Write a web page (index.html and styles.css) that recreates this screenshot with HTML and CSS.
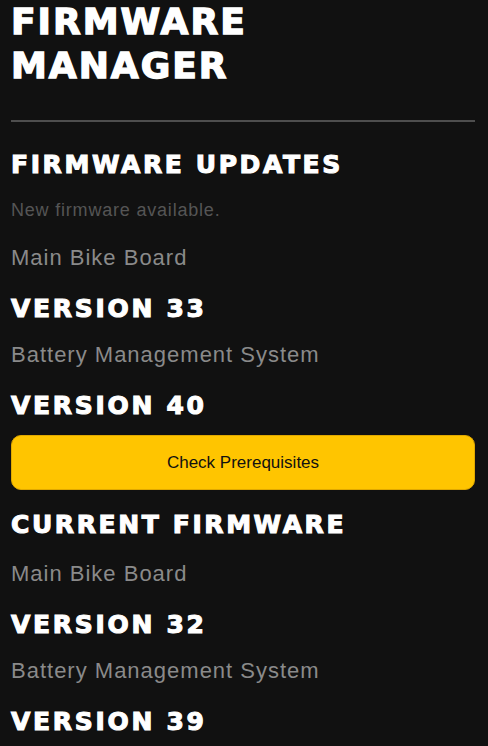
FILE: index.html
```html
<!DOCTYPE html>
<html lang="en">
<head>
<meta charset="utf-8">
<title>Firmware Manager</title>
<link rel="stylesheet" href="styles.css">
</head>
<body>
<main class="page">
  <h1 class="page-title">FIRMWARE<br>MANAGER</h1>
  <div class="divider"></div>

  <section class="section section-updates">
    <h2 class="section-title">FIRMWARE UPDATES</h2>
    <p class="note">New firmware available.</p>
    <div class="item">
      <div class="item-label">Main Bike Board</div>
      <div class="item-version">VERSION 33</div>
    </div>
    <div class="item">
      <div class="item-label">Battery Management System</div>
      <div class="item-version">VERSION 40</div>
    </div>
  </section>

  <button class="primary-btn" type="button">Check Prerequisites</button>

  <section class="section section-current">
    <h2 class="section-title">CURRENT FIRMWARE</h2>
    <div class="item">
      <div class="item-label">Main Bike Board</div>
      <div class="item-version">VERSION 32</div>
    </div>
    <div class="item">
      <div class="item-label">Battery Management System</div>
      <div class="item-version">VERSION 39</div>
    </div>
  </section>
</main>
</body>
</html>
```

FILE: styles.css
```css
html, body {
  margin: 0;
  padding: 0;
  background: #111111;
}

body {
  font-family: "Liberation Sans", Arial, sans-serif;
  color: #ffffff;
  overflow: hidden;
}

.page {
  display: flex;
  flex-direction: column;
  padding: 0 13px 0 11px;
}

.page-title {
  margin: 0;
  font-family: "DejaVu Sans", sans-serif;
  font-weight: bold;
  font-size: 36px;
  line-height: 44px;
  letter-spacing: 2px;
  color: #ffffff;
  -webkit-text-stroke: 1.4px #ffffff;
}

.divider {
  margin-top: 32px;
  height: 2px;
  background: #4e4e4e;
}

.section {
  display: flex;
  flex-direction: column;
}

.section-updates {
  margin-top: 27.5px;
}

.section-current {
  margin-top: 20.5px;
}

.section-title {
  margin: 0;
  font-family: "DejaVu Sans", sans-serif;
  font-weight: bold;
  font-size: 25px;
  line-height: 30px;
  letter-spacing: 2.6px;
  color: #ffffff;
  -webkit-text-stroke: 1.1px #ffffff;
}

.note {
  margin: 18px 0 0;
  font-size: 18px;
  line-height: 24px;
  letter-spacing: 0.8px;
  color: #555555;
}

.item {
  display: flex;
  flex-direction: column;
  gap: 22.5px;
  margin-top: 21px;
}

.section-updates .note + .item {
  margin-top: 23.5px;
}

.item + .item {
  margin-top: 18.5px;
}

.item-label {
  font-size: 22px;
  line-height: 26px;
  letter-spacing: 1px;
  color: #8a8a8a;
}

.item-version {
  font-family: "DejaVu Sans", sans-serif;
  font-weight: bold;
  font-size: 25px;
  line-height: 30px;
  letter-spacing: 2.7px;
  color: #ffffff;
  -webkit-text-stroke: 1.1px #ffffff;
}

.primary-btn {
  margin-top: 14px;
  height: 55px;
  border: 1px solid #e0a800;
  border-radius: 10px;
  background: #ffc500;
  color: #111111;
  font-family: "Liberation Sans", Arial, sans-serif;
  font-size: 17px;
  line-height: 53px;
  padding: 0;
  text-align: center;
}
```
